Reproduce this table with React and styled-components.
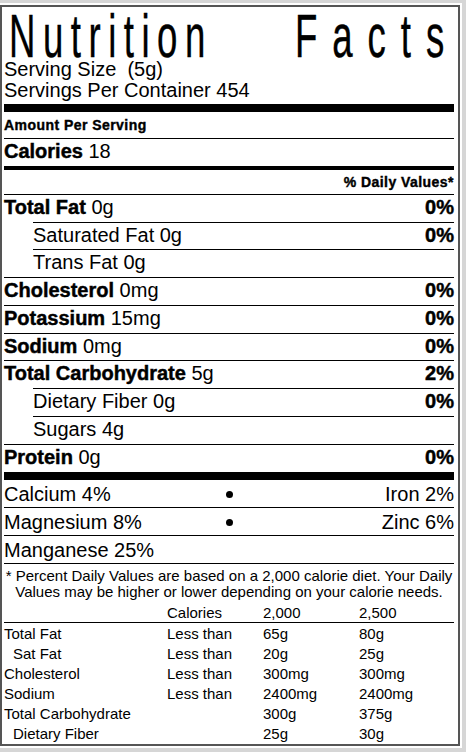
import React from "react"
import styled, { createGlobalStyle } from "styled-components"

const GlobalStyle = createGlobalStyle`
  body {
    margin: 0;
    background: #d6d6d6;
    font-family: "Liberation Sans", Arial, Helvetica, sans-serif;
    color: #000;
  }
`

const Frame = styled.div`
  box-sizing: border-box;
  width: 462px;
  margin-top: 3px;
  padding: 2px 2px 2px 0;
  background: #fff;
`

const Label = styled.div`
  box-sizing: border-box;
  width: 460px;
  border: 2px solid #555;
  padding: 5.5px 4px 0 2px;
  background: #fff;
`

const Title = styled.h1`
  display: grid;
  grid-template-columns: 285.8px auto;
  margin: 0;
  padding-left: 5.2px;
  height: 46px;
  overflow: visible;
  font-size: 61px;
  font-weight: 400;
  line-height: 46px;
  white-space: nowrap;
`

const Word = styled.span`
  display: inline-block;
  letter-spacing: ${(p) => p.$spacing}px;
  transform: scaleX(0.6);
  transform-origin: left center;
  -webkit-text-stroke: 0.4px #000;
`

const Serving = styled.div`
  padding-bottom: 3.5px;
  font-size: 20px;
  line-height: 21px;
`

const Bar = styled.div`
  height: ${(p) => p.$h}px;
  background: #000;
`

const SmallBold = styled.div`
  font-size: 14px;
  font-weight: 700;
  letter-spacing: 0.45px;
  line-height: ${(p) => p.$lh}px;
  text-align: ${(p) => (p.$right ? "right" : "left")};
  -webkit-text-stroke: 0.4px #000;
`

const Row = styled.div`
  display: flex;
  justify-content: space-between;
  margin-left: ${(p) => (p.$indent ? 29 : 0)}px;
  border-top: 1px solid #000;
  padding-bottom: 1px;
  font-size: 20px;
  line-height: 25.78px;
  white-space: nowrap;
`

const Name = styled.b`
  font-weight: 700;
  -webkit-text-stroke: 0.45px #000;
`

const Percent = styled.b`
  font-weight: 700;
  -webkit-text-stroke: 0.45px #000;
`

const VitaminRow = styled.div`
  display: grid;
  grid-template-columns: 1fr auto 1fr;
  border-bottom: 1px solid #000;
  padding-top: 1px;
  font-size: 20px;
  line-height: 26px;
  white-space: nowrap;
`

const Bullet = styled.span`
  align-self: start;
  width: 7px;
  height: 7px;
  margin-top: 10.5px;
  border-radius: 50%;
  background: ${(p) => (p.$hidden ? "transparent" : "#000")};
`

const Right = styled.span`
  text-align: right;
`

const Footnote = styled.p`
  margin: 0;
  padding-top: 4.25px;
  font-size: 15px;
  line-height: 16.5px;
  text-align: center;
`

const Table = styled.div`
  margin-top: 2px;
  font-size: 15px;
`

const TableHead = styled.div`
  display: grid;
  grid-template-columns: 163px 96px 96px 1fr;
  border-bottom: 1px solid #000;
  line-height: 19px;
`

const TableBody = styled.div`
  padding-top: 1.5px;
`

const TableRow = styled.div`
  display: grid;
  grid-template-columns: 163px 96px 96px 1fr;
  line-height: 20px;
  white-space: nowrap;
`

const Cell = styled.span`
  padding-left: ${(p) => (p.$indent ? 9 : 0)}px;
`

const nutrients = [
  { name: "Total Fat", amount: "0g", dv: "0%" },
  { name: "Saturated Fat", amount: "0g", dv: "0%", sub: true },
  { name: "Trans Fat", amount: "0g", sub: true },
  { name: "Cholesterol", amount: "0mg", dv: "0%" },
  { name: "Potassium", amount: "15mg", dv: "0%" },
  { name: "Sodium", amount: "0mg", dv: "0%" },
  { name: "Total Carbohydrate", amount: "5g", dv: "2%" },
  { name: "Dietary Fiber", amount: "0g", dv: "0%", sub: true },
  { name: "Sugars", amount: "4g", sub: true },
  { name: "Protein", amount: "0g", dv: "0%" },
]

const vitamins = [
  ["Calcium 4%", "Iron 2%"],
  ["Magnesium 8%", "Zinc 6%"],
  ["Manganese 25%"],
]

const limits = [
  ["Total Fat", "Less than", "65g", "80g"],
  ["Sat Fat", "Less than", "20g", "25g", true],
  ["Cholesterol", "Less than", "300mg", "300mg"],
  ["Sodium", "Less than", "2400mg", "2400mg"],
  ["Total Carbohydrate", "", "300g", "375g"],
  ["Dietary Fiber", "", "25g", "30g", true],
]

export default function App() {
  return (
    <>
      <GlobalStyle />
      <Frame>
        <Label>
          <Title>
            <Word $spacing={12.5}>Nutrition</Word>
            <Word $spacing={24.9}>Facts</Word>
          </Title>
          <Serving>
            <div>Serving Size{"\u00a0"} (5g)</div>
            <div>Servings Per Container 454</div>
          </Serving>
          <Bar $h={8} />
          <SmallBold $lh={26}>Amount Per Serving</SmallBold>
          <Row>
            <span>
              <Name>Calories</Name> 18
            </span>
          </Row>
          <Bar $h={4} />
          <SmallBold $lh={24} $right>% Daily Values*</SmallBold>
          {nutrients.map((n) => (
            <Row key={n.name} $indent={n.sub}>
              <span>
                {n.sub ? n.name : <Name>{n.name}</Name>} {n.amount}
              </span>
              {n.dv && <Percent>{n.dv}</Percent>}
            </Row>
          ))}
          <Bar $h={8} />
          {vitamins.map((v) => (
            <VitaminRow key={v[0]}>
              <span>{v[0]}</span>
              <Bullet $hidden={!v[1]} />
              <Right>{v[1] || ""}</Right>
            </VitaminRow>
          ))}
          <Footnote>
            * Percent Daily Values are based on a 2,000 calorie diet. Your Daily Values may be
            higher or lower depending on your calorie needs.
          </Footnote>
          <Table>
            <TableHead>
              <span />
              <span>Calories</span>
              <span>2,000</span>
              <span>2,500</span>
            </TableHead>
            <TableBody>
              {limits.map((l) => (
                <TableRow key={l[0]}>
                  <Cell $indent={l[4]}>{l[0]}</Cell>
                  <Cell>{l[1]}</Cell>
                  <Cell>{l[2]}</Cell>
                  <Cell>{l[3]}</Cell>
                </TableRow>
              ))}
            </TableBody>
          </Table>
        </Label>
      </Frame>
    </>
  )
}
